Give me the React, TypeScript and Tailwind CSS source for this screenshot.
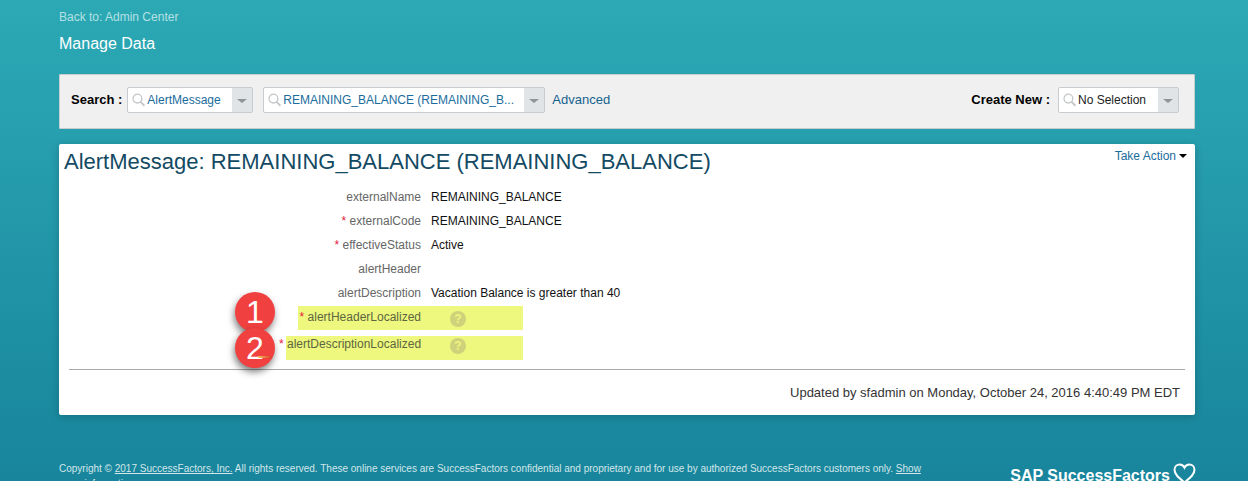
import React from 'react'

const font = "font-['Liberation_Sans',Arial,sans-serif]"

// Search glyph used inside the combo boxes
const SearchIcon = () => (
    <svg className="w-[13px] h-[14px] shrink-0" viewBox="0 0 13 14" fill="none" stroke="#c4c7c9" strokeWidth="1.3">
        <circle cx="5.4" cy="5.6" r="4.4" />
        <path d="M8.6 8.8 L12.4 12.8" strokeWidth="1.8" />
    </svg>
)

const Combo = ({ text, width, color }: { text: string; width: string; color: string }) => (
    <div className={`flex h-[26px] border border-[#c6ccd0] rounded-[2px] bg-white ${width}`}>
        <div className="flex flex-1 min-w-0 items-center pl-[4px] gap-[2px]">
            <SearchIcon />
            <span className={`text-[12px] whitespace-nowrap ${color}`}>{text}</span>
        </div>
        <div className="w-[20px] bg-[#e0e4e6] flex items-center justify-center">
            <span className="w-0 h-0 border-l-[5px] border-r-[5px] border-t-[4px] border-l-transparent border-r-transparent border-t-[#8f9496] mt-[2px]"></span>
        </div>
    </div>
)

const rows = [
    { label: 'externalName', value: 'REMAINING_BALANCE' },
    { label: 'externalCode', value: 'REMAINING_BALANCE', required: true },
    { label: 'effectiveStatus', value: 'Active', required: true },
    { label: 'alertHeader', value: '' },
    { label: 'alertDescription', value: 'Vacation Balance is greater than 40' },
]

const Help = () => (
    <span className="w-4 h-4 rounded-full bg-[#cfd27a] text-[#eef57f] text-[12px] font-bold flex items-center justify-center ml-[29px] mt-[1px]">
        ?
    </span>
)

const Callout = ({ n, className, children }: { n: number; className: string; children?: React.ReactNode }) => (
    <div
        className={`absolute w-10 h-10 rounded-full bg-[#f04040] text-white text-[32px] leading-10 text-center shadow-[-1px_4px_7px_rgba(0,0,0,0.5)] ${className}`}
    >
        {n}
        {children}
    </div>
)

export default function App() {
    return (
        <div className={`${font} relative h-[481px] overflow-hidden bg-gradient-to-b from-[#2ca9b5] to-[#18859c] pl-[59px] pr-[53px]`}>
            <div className="pt-[10px] text-[12px] leading-[14px] text-[#b5e0e3]">Back to: Admin Center</div>
            <div className="mt-[11px] text-[16px] leading-[18px] text-white">Manage Data</div>

            <div className="mt-[21px] h-[55px] bg-[#f0f0f0] border border-[#c9cdcf] rounded-[1px] flex items-start pt-[12px] pl-[11px] pr-[15px]">
                <span className="h-[26px] leading-[25px] text-[13px] font-bold text-black mr-[5px] whitespace-nowrap">Search :</span>
                <Combo text="AlertMessage" width="w-[126px]" color="text-[#1a6c9c]" />
                <div className="w-[10px]"></div>
                <Combo text="REMAINING_BALANCE (REMAINING_B..." width="w-[282px]" color="text-[#1a6c9c]" />
                <a className="h-[26px] leading-[25px] ml-[7px] text-[13px] text-[#15628f]">Advanced</a>
                <span className="h-[26px] leading-[25px] ml-auto text-[13px] font-bold text-black mr-[8px] whitespace-nowrap">Create New :</span>
                <Combo text="No Selection" width="w-[121px]" color="text-[#222]" />
            </div>

            <div className="mt-[15px] h-[271px] bg-white rounded-[2px] shadow-[0_2px_8px_rgba(0,0,0,0.2)] flex flex-col">
                <div className="flex justify-between pl-[5px] pr-[8px] pt-[5px]">
                    <h1 className="text-[22px] leading-[26px] text-[#134a63]">AlertMessage: REMAINING_BALANCE (REMAINING_BALANCE)</h1>
                    <div className="text-[12px] leading-[14px] text-[#1a6c9c] whitespace-nowrap">
                        Take Action
                        <span className="inline-block w-0 h-0 ml-[3px] mb-[2px] border-l-[4px] border-r-[4px] border-t-[4px] border-l-transparent border-r-transparent border-t-black"></span>
                    </div>
                </div>

                <div className="mt-[10px] text-[12px]">
                    {rows.map((r) => (
                        <div key={r.label} className="flex h-6 items-center">
                            <div className="w-[362px] text-right text-[#666]">
                                {r.required && <span className="text-[#e6173a]">* </span>}
                                {r.label}
                            </div>
                            <div className="ml-[10px] text-[#111]">{r.value}</div>
                        </div>
                    ))}
                </div>

                <div className="mt-[1px] ml-[239px] w-[225px] h-6 bg-[#eef77e] flex items-start pt-[4px] text-[12px] leading-[14px]">
                    <div className="w-[123px] text-right text-[#5c6640] whitespace-nowrap">
                        <span className="text-[#e6173a]">* </span>alertHeaderLocalized
                    </div>
                    <Help />
                </div>
                <div className="mt-[6px] flex items-start text-[12px] leading-[14px]">
                    <span className="ml-[220px] w-[7px] pt-[1px] text-[#e6173a]">*</span>
                    <div className="w-[237px] h-6 bg-[#eef77e] flex items-start pt-[1px]">
                        <div className="pl-[1px] w-[135px] text-[#5c6640] whitespace-nowrap">alertDescriptionLocalized</div>
                        <Help />
                    </div>
                </div>

                <div className="mt-[9px] mx-[10px] border-t border-[#a9a9a9]"></div>
                <div className="mt-[13px] pr-[15px] text-right text-[13px] text-[#333]">
                    Updated by sfadmin on Monday, October 24, 2016 4:40:49 PM EDT
                </div>
            </div>

            <div className="mt-[46px] flex justify-between">
                <div className="w-[870px] text-[10px] leading-[15px] text-[#d3e6ea]">
                    Copyright © <a className="underline">2017 SuccessFactors, Inc.</a> All rights reserved. These online services are SuccessFactors confidential and proprietary and for use by authorized SuccessFactors customers only. <a className="underline">Show more information</a>
                </div>
                <div className="flex items-start mt-[6px] mr-[-1px]">
                    <span className="text-[16px] leading-[18px] font-bold text-white whitespace-nowrap">SAP SuccessFactors</span>
                    <svg className="w-[23px] h-[21px] ml-[3px] -mt-[4px]" viewBox="0 0 23 21" fill="none" stroke="white" strokeWidth="2">
                        <path d="M11.5 19.5 C6 15 1.5 11.5 1.5 6.8 C1.5 3.6 4 1.5 6.6 1.5 C8.8 1.5 10.6 2.7 11.5 4.6 C12.4 2.7 14.2 1.5 16.4 1.5 C19 1.5 21.5 3.6 21.5 6.8 C21.5 11.5 17 15 11.5 19.5 Z" />
                    </svg>
                </div>
            </div>

            <Callout n={1} className="left-[235px] top-[292px]" />
            <Callout n={2} className="left-[235px] top-[328px]">
                <span className="absolute left-[23px] top-[28px] w-[13px] h-[2px] bg-gradient-to-r from-[#f0c060] to-[#d8402a]"></span>
            </Callout>
        </div>
    )
}
